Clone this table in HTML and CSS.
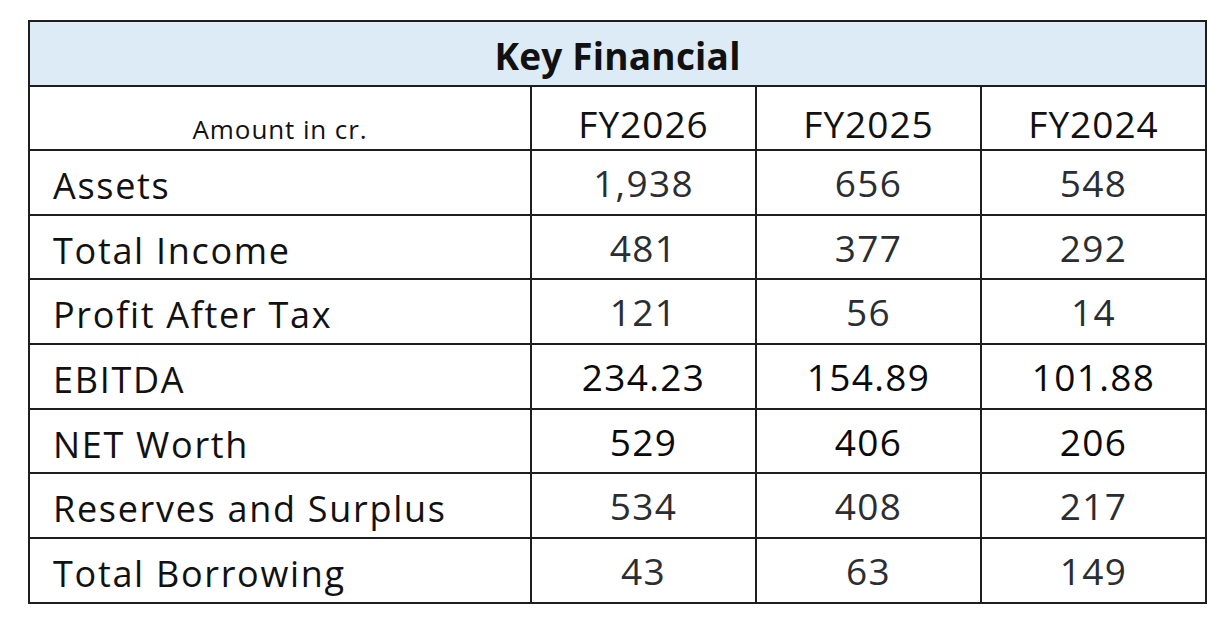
FILE: index.html
```html
<!DOCTYPE html>
<html>
<head>
<meta charset="utf-8">
<link rel="stylesheet" href="styles.css">
</head>
<body>
<div class="page">
<table class="fin">
<colgroup>
<col class="c-label"><col class="c-num"><col class="c-num"><col class="c-num">
</colgroup>
<tr class="title-row"><th colspan="4" class="title">Key Financial</th></tr>
<tr class="head-row"><th class="unit">Amount in cr.</th><th class="year">FY2026</th><th class="year">FY2025</th><th class="year">FY2024</th></tr>
<tr class="data-row"><td class="label">Assets</td><td class="num grey">1,938</td><td class="num grey">656</td><td class="num grey">548</td></tr>
<tr class="data-row"><td class="label">Total Income</td><td class="num grey">481</td><td class="num grey">377</td><td class="num grey">292</td></tr>
<tr class="data-row"><td class="label">Profit After Tax</td><td class="num grey">121</td><td class="num grey">56</td><td class="num grey">14</td></tr>
<tr class="data-row"><td class="label">EBITDA</td><td class="num dark">234.23</td><td class="num dark">154.89</td><td class="num dark">101.88</td></tr>
<tr class="data-row"><td class="label">NET Worth</td><td class="num dark">529</td><td class="num dark">406</td><td class="num dark">206</td></tr>
<tr class="data-row"><td class="label">Reserves and Surplus</td><td class="num grey">534</td><td class="num grey">408</td><td class="num grey">217</td></tr>
<tr class="data-row"><td class="label">Total Borrowing</td><td class="num grey">43</td><td class="num grey">63</td><td class="num grey">149</td></tr>
</table>
</div>
</body>
</html>
```

FILE: styles.css
```css
html, body {
  margin: 0;
  padding: 0;
  background: #ffffff;
}
.page {
  padding: 20px 0 0 28px;
}
.fin {
  border-collapse: collapse;
  table-layout: fixed;
  width: 1177px;
  font-family: "Open Sans", "Liberation Sans", sans-serif;
  color: #111111;
}
.c-label { width: 502px; }
.c-num { width: 225px; }
.fin th, .fin td {
  border: 2px solid #1e1e1e;
  padding: 0;
  font-weight: 400;
}
.fin .title-row { height: 65px; }
.fin .title {
  background: #ddebf7;
  font-weight: 700;
  font-size: 37px;
  text-align: center;
  vertical-align: middle;
  letter-spacing: 0.2px;
  padding-top: 4px;
}
.fin .head-row { height: 64px; }
.fin .unit {
  font-size: 26px;
  text-align: center;
  vertical-align: bottom;
  padding-bottom: 2px;
  letter-spacing: 0.9px;
}
.fin .year {
  font-size: 37px;
  text-align: center;
  vertical-align: bottom;
  padding-bottom: 0;
  letter-spacing: 1px;
}
.fin .data-row { height: 64.7px; }
.fin .label {
  font-size: 36px;
  text-align: left;
  padding-left: 23px;
  padding-top: 6px;
  vertical-align: middle;
  letter-spacing: 1.7px;
}
.fin .num {
  font-size: 37px;
  text-align: center;
  vertical-align: middle;
  letter-spacing: 1.3px;
}
.grey { color: #2a2d31; }
.dark { color: #0a0a0a; }
```
